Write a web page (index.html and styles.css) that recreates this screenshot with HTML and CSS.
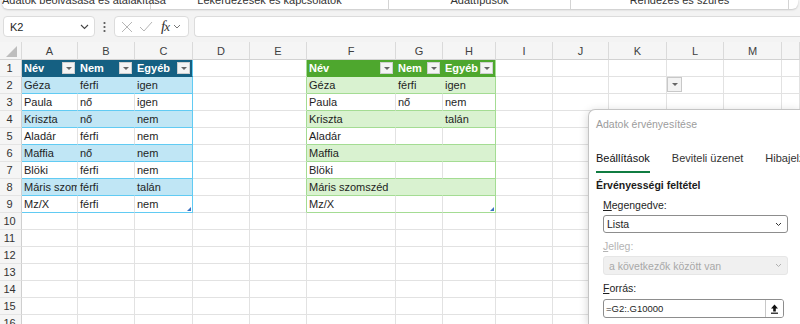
FILE: index.html
```html
<!DOCTYPE html>
<html lang="hu">
<head>
  <meta charset="UTF-8" />
  <title>Adatok érvényesítése</title>
  <link rel="stylesheet" href="styles.css">
</head>
<body>

<div class="ribbon">
  <div class="group g1"><span>Adatok beolvasása és átalakítása</span></div>
  <div class="group g2"><span>Lekérdezések és kapcsolatok</span></div>
  <div class="group g3"><span>Adattípusok</span></div>
  <div class="group g4"><span>Rendezés és szűrés</span></div>
</div>

<div class="formula-bar">
  <div class="name-box">
    <span>K2</span>
    <svg width="9" height="6" viewBox="0 0 9 6"><path d="M1 1l3.5 3.5L8 1" fill="none" stroke="#444" stroke-width="1.1"/></svg>
  </div>
  <div class="dots">
    <svg width="3" height="12" viewBox="0 0 3 12"><circle cx="1.5" cy="2" r="1.1" fill="#555"/><circle cx="1.5" cy="6" r="1.1" fill="#555"/><circle cx="1.5" cy="10" r="1.1" fill="#555"/></svg>
  </div>
  <div class="fx-box">
    <svg class="cancel" width="12" height="12" viewBox="0 0 12 12"><path d="M1 1l10 10M11 1L1 11" stroke="#b5b5b5" stroke-width="1"/></svg>
    <svg class="enter" width="14" height="11" viewBox="0 0 14 11"><path d="M1 6l4 4 8-9" fill="none" stroke="#b5b5b5" stroke-width="1"/></svg>
    <span class="fx"><i>f</i><i class="x">x</i></span>
    <svg width="8" height="5" viewBox="0 0 8 5"><path d="M1 1l3 3 3-3" fill="none" stroke="#777" stroke-width="1"/></svg>
  </div>
  <div class="formula-input"></div>
</div>

<div id="sheet" class="sheet"></div>

<div class="dialog">
  <div class="dlg-title">Adatok érvényesítése</div>
  <div class="tabs">
    <span class="tab active">Beállítások</span>
    <span class="tab">Beviteli üzenet</span>
    <span class="tab">Hibajelzés</span>
  </div>
  <div class="section">Érvényességi feltétel</div>
  <div class="form">
    <label><u>M</u>egengedve:</label>
    <div class="select">
      <span>Lista</span>
      <svg width="7" height="5" viewBox="0 0 7 5"><path d="M1 1l2.5 2.5L6 1" fill="none" stroke="#333" stroke-width="1"/></svg>
    </div>
    <label class="disabled"><u>J</u>elleg:</label>
    <div class="select disabled">
      <span>a következők között van</span>
      <svg width="7" height="5" viewBox="0 0 7 5"><path d="M1 1l2.5 2.5L6 1" fill="none" stroke="#b0b0b0" stroke-width="1"/></svg>
    </div>
    <label><u>F</u>orrás:</label>
    <div class="ref-input">
      <span>=G2:.G10000</span>
      <button class="ref-btn">
        <svg width="9" height="10" viewBox="0 0 9 10"><path d="M4.5 0.5L1 4.5h2.2V7.5h2.6V4.5H8z" fill="#111"/><rect x="1" y="8.6" width="7" height="1.2" fill="#111"/></svg>
      </button>
    </div>
  </div>
</div>

<script>
const widths = [22, 56, 57, 58, 57, 57, 89, 47, 53, 57, 56, 58, 57, 58, 18];
const letters = ["", "A", "B", "C", "D", "E", "F", "G", "H", "I", "J", "K", "L", "M", ""];
const ROWS = 16;

const table1 = [
  ["Név", "Nem", "Egyéb"],
  ["Géza", "férfi", "igen"],
  ["Paula", "nő", "igen"],
  ["Kriszta", "nő", "nem"],
  ["Aladár", "férfi", "nem"],
  ["Maffia", "nő", "nem"],
  ["Blöki", "férfi", "nem"],
  ["Máris szomszéd", "férfi", "talán"],
  ["Mz/X", "férfi", "nem"]
];
const table2 = [
  ["Név", "Nem", "Egyéb"],
  ["Géza", "férfi", "igen"],
  ["Paula", "nő", "nem"],
  ["Kriszta", "", "talán"],
  ["Aladár", "", ""],
  ["Maffia", "", ""],
  ["Blöki", "", ""],
  ["Máris szomszéd", "", ""],
  ["Mz/X", "", ""]
];

function makeCell(r, c) {
  const cell = document.createElement("div");
  cell.className = "cell";
  if (r === 0) {
    cell.classList.add(c === 0 ? "corner" : "col-head");
    cell.textContent = letters[c];
    return cell;
  }
  if (c === 0) {
    cell.classList.add("row-head");
    cell.textContent = r;
    return cell;
  }

  const inRows = r <= 9;
  let tbl = null, data = null, first = 0;
  if (inRows && c >= 1 && c <= 3) { tbl = "t1"; data = table1; first = 1; }
  if (inRows && c >= 6 && c <= 8) { tbl = "t2"; data = table2; first = 6; }

  if (tbl) {
    const idx = c - first;
    let text = data[r - 1][idx];
    // a long name is cut where the next column has a value
    if (tbl === "t1" && idx === 0 && text.length > 10) text = text.slice(0, 10);
    cell.classList.add(tbl);
    cell.textContent = text;
    if (r === 1) {
      cell.classList.add("head");
      const btn = document.createElement("span");
      btn.className = "filter";
      cell.appendChild(btn);
    } else if (r % 2 === 0) {
      cell.classList.add("band");
    }
    if (idx === 2) cell.classList.add("last");
    if (r === 9) cell.classList.add("bottom");
    if (r === 9 && idx === 2) cell.classList.add("resize");
    if (tbl === "t2" && idx === 0 && data[r - 1][1] === "") cell.classList.add("spill");
  }
  if (inRows && c === 5) cell.classList.add("before-t2");
  if (r === 2 && c === 11) {
    const dd = document.createElement("span");
    dd.className = "dv-drop";
    cell.appendChild(dd);
  }
  return cell;
}

function drawSheet() {
  const sheet = document.getElementById("sheet");
  sheet.style.gridTemplateColumns = widths.map(w => w + "px").join(" ");
  for (let r = 0; r <= ROWS; r++) {
    for (let c = 0; c < widths.length; c++) {
      sheet.appendChild(makeCell(r, c));
    }
  }
}

drawSheet();
</script>

</body>
</html>
```

FILE: styles.css
```css
body {
  margin: 0;
  background: #f3f3f3;
  font-family: "Liberation Sans", Arial, sans-serif;
  color: #1e1e1e;
  overflow: hidden;
  width: 800px;
  height: 324px;
  position: relative;
}

/* ribbon strip, only the bottom of the group labels is visible */
.ribbon {
  display: flex;
  height: 9px;
  margin: 0 2px;
  background: #fff;
  border-radius: 0 0 6px 6px;
  box-shadow: 0 1px 2px rgba(0,0,0,0.18);
  overflow: hidden;
}
.group {
  border-right: 1px solid #d4d4d4;
  text-align: center;
  font-size: 11px;
  line-height: 12px;
  color: #333;
  white-space: nowrap;
}
.group span { display: block; margin-top: -6px; }
.g1 { width: 148px; }
.g2 { width: 237px; }
.g3 { width: 181px; }
.g4 { width: 217px; }

/* formula bar */
.formula-bar {
  display: flex;
  align-items: center;
  height: 21px;
  margin-top: 7px;
  padding-left: 3px;
}
.name-box {
  box-sizing: border-box;
  width: 92px;
  height: 21px;
  display: flex;
  align-items: center;
  justify-content: space-between;
  padding: 0 5px 0 6px;
  background: #fff;
  border: 1px solid #dcdcdc;
  border-radius: 4px;
  font-size: 11px;
}
.dots { width: 19px; display: flex; justify-content: center; }
.fx-box {
  box-sizing: border-box;
  width: 75px;
  height: 21px;
  display: flex;
  align-items: center;
  padding: 0 4px 0 6px;
  background: #fff;
  border: 1px solid #dcdcdc;
  border-radius: 4px;
}
.fx-box .cancel { margin-right: 6px; }
.fx-box .enter { margin-right: 8px; }
.fx {
  font-family: "Liberation Serif", serif;
  font-size: 15px;
  color: #333;
  margin-right: 3px;
  line-height: 15px;
}
.fx .x { font-size: 13px; margin-left: -1px; }
.formula-input {
  flex: 1;
  height: 21px;
  box-sizing: border-box;
  margin-left: 5px;
  background: #fff;
  border: 1px solid #dcdcdc;
  border-right: none;
  border-radius: 4px 0 0 4px;
}

/* grid */
.sheet {
  display: grid;
  grid-template-rows: 18px;
  grid-auto-rows: 17px;
  margin-top: 5px;
  height: 282px;
  overflow: hidden;
  background: #fff;
}
.cell {
  box-sizing: border-box;
  position: relative;
  border-right: 1px solid #e2e2e2;
  border-bottom: 1px solid #e2e2e2;
  padding: 0 2px;
  font-size: 11px;
  line-height: 16px;
  white-space: nowrap;
  overflow: hidden;
}
.corner, .col-head {
  background: #f5f5f5;
  border-bottom: 1px solid #d2d2d2;
  border-right-color: #dadada;
  text-align: center;
  color: #404040;
  line-height: 18px;
}
.corner::after {
  content: "";
  position: absolute;
  right: 4px;
  bottom: 2px;
  border-left: 11px solid transparent;
  border-bottom: 11px solid #bdbdbd;
}
.row-head {
  background: #f5f5f5;
  border-right: 1px solid #cfcfcf;
  border-bottom-color: #e4e4e4;
  text-align: center;
  padding: 0 2px 0 0;
  color: #333;
}

/* table 1: blue style */
.t1 { border-bottom-color: #61cbf3; }
.t1.head { background: #156082; border-right-color: #156082; border-bottom-color: #156082; color: #fff; font-weight: bold; }
.t1.band { background: #c0e6f5; border-right-color: #c0e6f5; }
.t1.last { border-right-color: #61cbf3; }

/* table 2: green style */
.t2 { border-bottom-color: #a4dc93; }
.t2.head { background: #4ea72e; border-right-color: #4ea72e; border-bottom-color: #4ea72e; color: #fff; font-weight: bold; }
.t2.band { background: #d9f2d0; border-right-color: #d9f2d0; }
.t2.last { border-right-color: #a4dc93; }
.before-t2 { border-right-color: #a4dc93; }
.t2.spill { overflow: visible; z-index: 1; }
.t2.spill.band { border-right-color: #d9f2d0; }

.filter {
  position: absolute;
  right: 2px;
  top: 2px;
  box-sizing: border-box;
  width: 13px;
  height: 12px;
  background: #f4f4f4;
  border: 1px solid #cfcfcf;
}
.filter::after, .dv-drop::after {
  content: "";
  position: absolute;
  left: 3px;
  top: 4px;
  border-left: 3px solid transparent;
  border-right: 3px solid transparent;
  border-top: 3px solid #666;
}

.resize::after {
  content: "";
  position: absolute;
  right: 1px;
  bottom: 1px;
  border-left: 4px solid transparent;
  border-bottom: 4px solid #3a72c2;
}

.cell:has(.dv-drop) { overflow: visible; z-index: 1; }
.dv-drop {
  position: absolute;
  left: 100%;
  top: 0;
  box-sizing: border-box;
  width: 15px;
  height: 15px;
  margin-left: 1px;
  background: #f3f3f3;
  border: 1px solid #c8c8c8;
}
.dv-drop::after { left: 4px; top: 5px; }

.dialog {
  position: absolute;
  left: 588px;
  top: 109px;
  width: 212px;
  height: 215px;
  box-sizing: border-box;
  padding: 7px 0 0 7px;
  background: #fff;
  border: 1px solid #c4c4c4;
  border-right: none;
  border-bottom: none;
  border-radius: 7px 0 0 0;
  box-shadow: 0 2px 10px rgba(0,0,0,0.18);
  font-size: 11px;
  overflow: hidden;
}
.dlg-title {
  color: #9c9c9c;
  font-size: 10.5px;
  line-height: 14px;
}
.tabs {
  display: flex;
  gap: 22px;
  margin-top: 20px;
  white-space: nowrap;
}
.tab {
  font-size: 11px;
  line-height: 15px;
  padding-bottom: 5px;
  color: #333;
}
.tab.active {
  color: #111;
  border-bottom: 2px solid #107c41;
}
.section {
  font-weight: bold;
  font-size: 10.5px;
  line-height: 13px;
  margin-top: 6px;
  color: #1b1b1b;
}
.form {
  padding-left: 7px;
  width: 185px;
}
.form label {
  display: block;
  font-size: 10.5px;
  line-height: 13px;
  margin-top: 7px;
  color: #1e1e1e;
}
.form label.disabled { color: #b4b4b4; }
.select {
  box-sizing: border-box;
  height: 18px;
  display: flex;
  align-items: center;
  justify-content: space-between;
  padding: 0 5px 0 3px;
  margin-top: 3px;
  border: 1px solid #8d8d8d;
  border-radius: 3px;
  font-size: 10.5px;
}
.select.disabled {
  height: 19px;
  background: #f0f0f0;
  border-color: #e6e6e6;
  color: #a8a8a8;
  padding-left: 5px;
}
.ref-input {
  box-sizing: border-box;
  width: 181px;
  height: 19px;
  display: flex;
  align-items: center;
  justify-content: space-between;
  margin-top: 4px;
  border: 1px solid #8d8d8d;
  border-radius: 3px;
  font-size: 9.5px;
  padding-left: 2px;
  overflow: hidden;
}
.ref-btn {
  width: 18px;
  height: 17px;
  padding: 0;
  border: none;
  border-left: 1px solid #c8c8c8;
  background: #fff;
  display: flex;
  align-items: center;
  justify-content: center;
}
```
